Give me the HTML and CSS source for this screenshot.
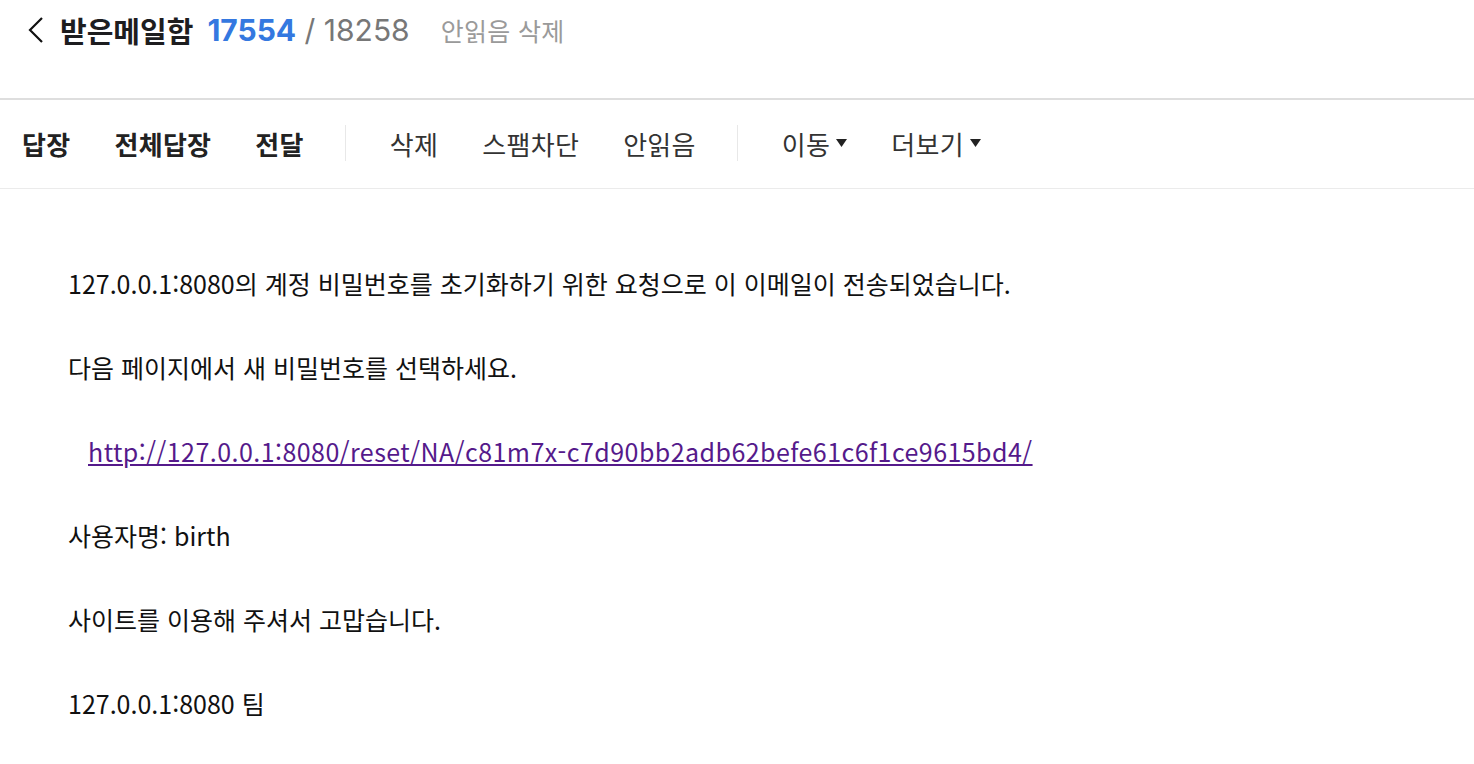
FILE: index.html
```html
<!DOCTYPE html>
<html lang="ko">
  <head>
    <meta charset="UTF-8" />
    <meta name="viewport" content="width=device-width, initial-scale=1.0" />
    <title>받은메일함</title>
    <link rel="stylesheet" href="styles.css">
  </head>
  <body>
    <header class="mail-header">
      <a class="back" href="#" aria-label="뒤로">
        <svg width="20" height="28" viewBox="0 0 20 28">
          <polyline points="17,2 5,14 17,26" fill="none" stroke="#111" stroke-width="2.2" />
        </svg>
      </a>
      <h1 class="title">받은메일함</h1>
      <span class="count"><span class="unread">17554</span> / 18258</span>
      <a class="clear-unread" href="#">안읽음 삭제</a>
    </header>

    <nav class="toolbar">
      <button class="tool strong">답장</button>
      <button class="tool strong">전체답장</button>
      <button class="tool strong">전달</button>
      <span class="sep"></span>
      <button class="tool">삭제</button>
      <button class="tool">스팸차단</button>
      <button class="tool">안읽음</button>
      <span class="sep"></span>
      <button class="tool">이동<svg class="caret" width="11" height="8" viewBox="0 0 11 8"><polygon points="0,0 11,0 5.5,8" fill="#222" /></svg></button>
      <button class="tool">더보기<svg class="caret" width="11" height="8" viewBox="0 0 11 8"><polygon points="0,0 11,0 5.5,8" fill="#222" /></svg></button>
    </nav>

    <main class="mail-body">
      <p>127.0.0.1:8080의 계정 비밀번호를 초기화하기 위한 요청으로 이 이메일이 전송되었습니다.</p>
      <p>다음 페이지에서 새 비밀번호를 선택하세요.</p>
      <p class="link-line"><a href="#">http://127.0.0.1:8080/reset/NA/c81m7x-c7d90bb2adb62befe61c6f1ce9615bd4/</a></p>
      <p>사용자명: birth</p>
      <p>사이트를 이용해 주셔서 고맙습니다.</p>
      <p>127.0.0.1:8080 팀</p>
    </main>
  </body>
</html>
```

FILE: styles.css
```css
body {
  margin: 0;
  font-family: "Noto Sans CJK KR", "Noto Sans", sans-serif;
  color: #111;
  background: #fff;
}
a {
  text-decoration: none;
}

/* header */
.mail-header {
  display: flex;
  align-items: center;
  height: 60px;
  padding: 0 0 38px 25px;
  border-bottom: 2px solid #dedede;
}
.back {
  display: flex;
  margin-right: 15px;
}
.title {
  margin: 0;
  font-size: 29px;
  font-weight: 700;
  color: #1d1d1f;
}
.count {
  margin-left: 14px;
  font-family: "Inter", "Noto Sans CJK KR", sans-serif;
  font-size: 30px;
  color: #777;
}
.unread {
  font-weight: 700;
  color: #3478e0;
}
.clear-unread {
  margin-left: 31px;
  font-size: 25px;
  letter-spacing: 0.3px;
  color: #9a9a9a;
}

/* toolbar */
.toolbar {
  display: flex;
  align-items: center;
  height: 86px;
  padding-bottom: 2px;
  border-bottom: 1px solid #ebebeb;
}
.tool {
  display: flex;
  align-items: center;
  border: 0;
  background: none;
  padding: 0 22px;
  font-family: inherit;
  font-size: 26px;
  letter-spacing: 0.3px;
  color: #333;
  cursor: pointer;
}
.tool.strong {
  font-weight: 700;
  color: #222;
}
.caret {
  margin-left: 6px;
}
.sep {
  width: 1px;
  height: 36px;
  background: #e8e8e8;
  margin: 0 22px 0 19px;
}

/* message */
.mail-body {
  padding: 73px 68px 0;
  font-size: 25px;
  line-height: 42px;
}
.mail-body p {
  margin: 0 0 42px;
}
.mail-body p:last-child {
  margin-bottom: 0;
}
.link-line {
  padding-left: 20px;
}
.link-line a {
  color: #551a8b;
  text-decoration: underline;
  letter-spacing: 0.45px;
}
```
